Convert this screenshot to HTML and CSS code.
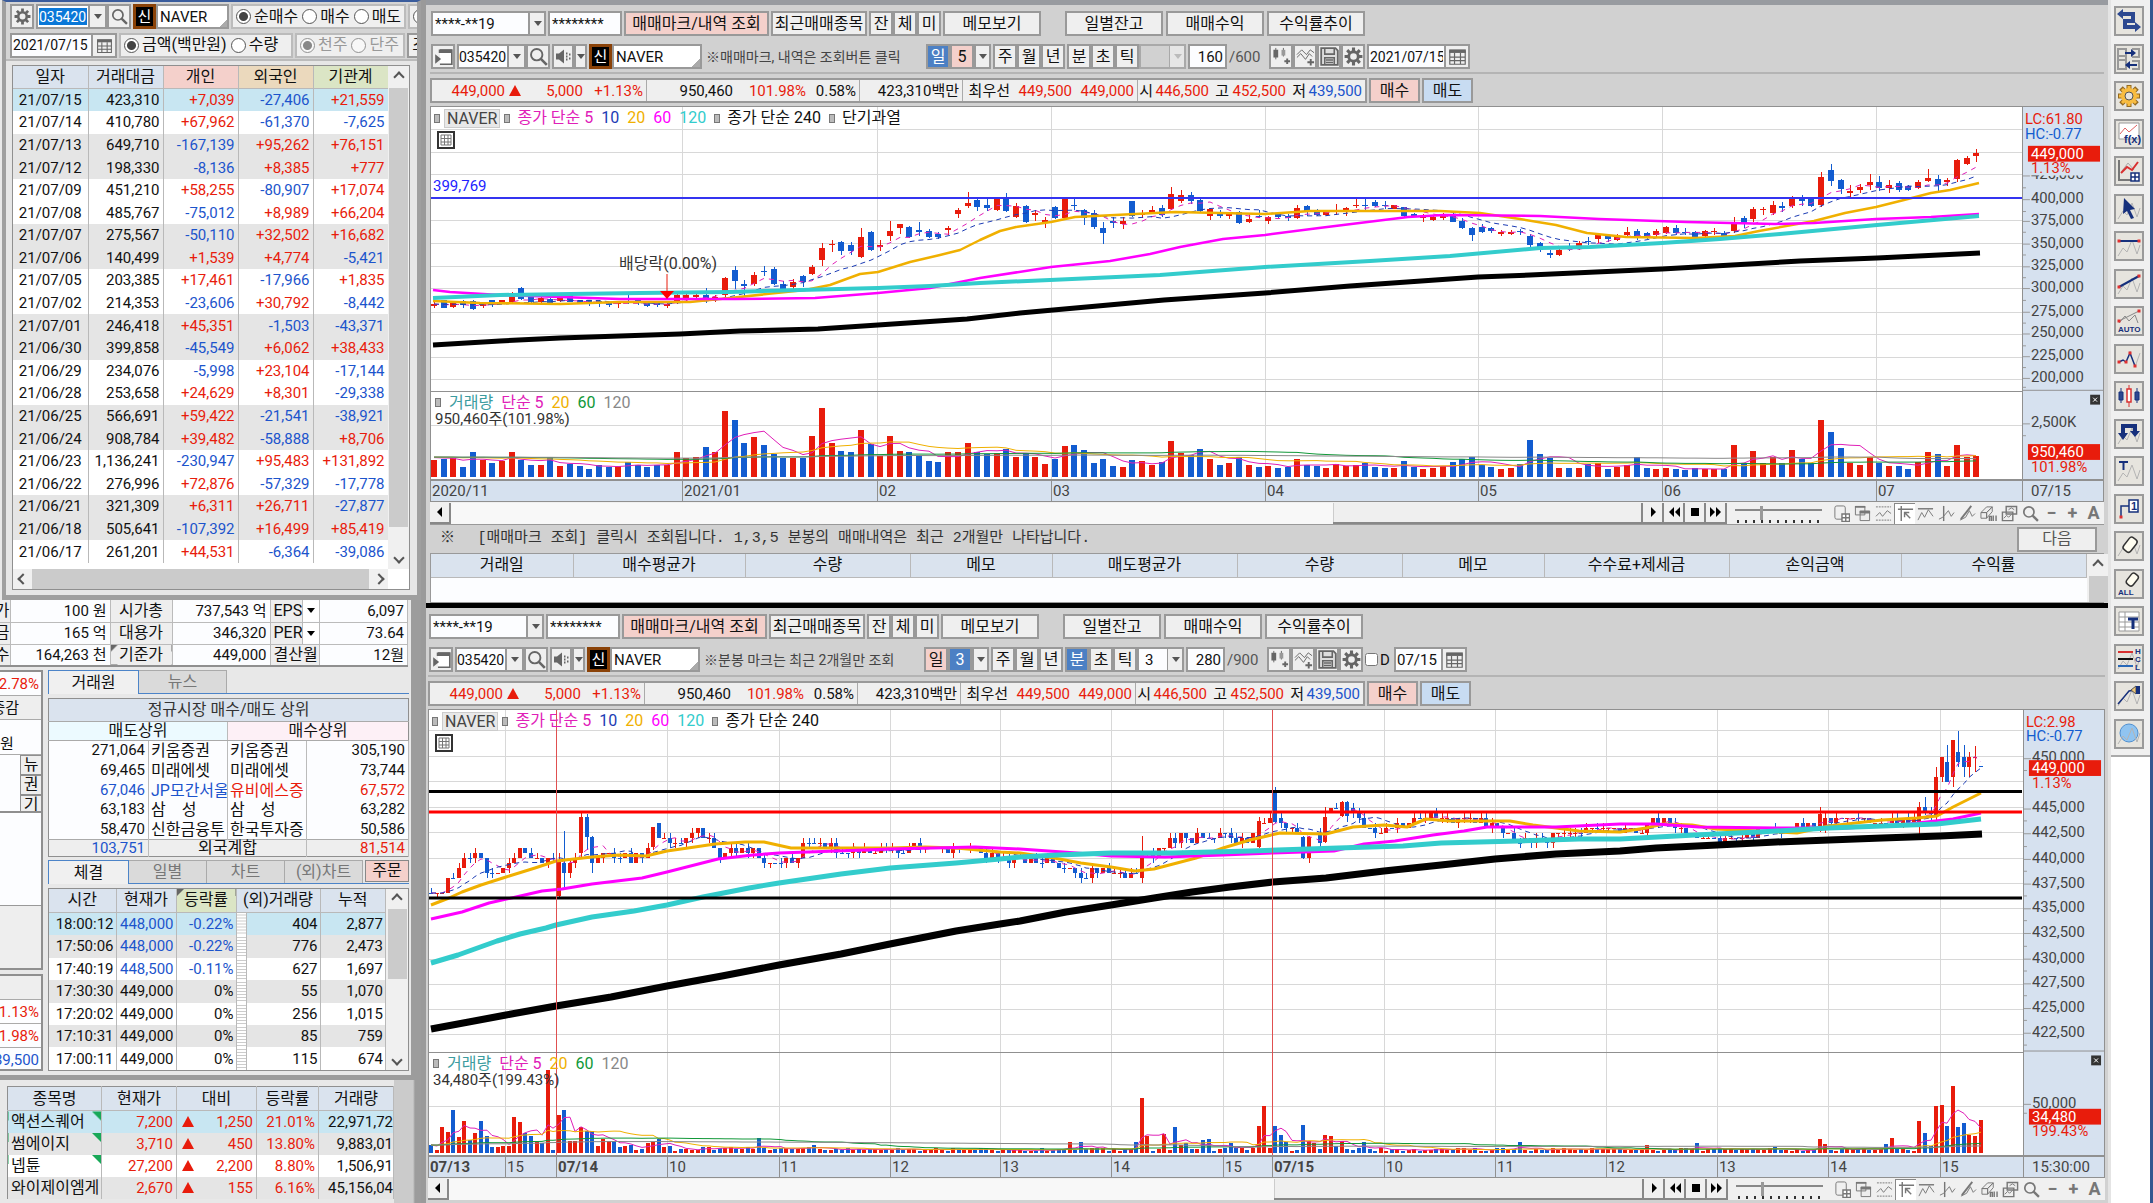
FILE: index.html
```html
<!DOCTYPE html>
<html lang="ko">
<head>
<meta charset="utf-8">
<title>NAVER 종합차트</title>
<link rel="stylesheet" href="styles.css">
</head>
<body>
<svg class="defs" aria-hidden="true">
  <symbol id="gear" viewBox="0 0 16 16"><circle cx="8" cy="8" r="4" fill="none" stroke="currentColor" stroke-width="2.4"/><path d="M8 .5v3M8 12.500v3M.5 8h3M12.500 8h3M2.700 2.700l2 2M11.300 11.300l2 2M2.700 13.300l2-2M11.300 4.700l2-2" stroke="currentColor" stroke-width="2.600"/></symbol>
  <symbol id="mag" viewBox="0 0 16 16"><circle cx="6.500" cy="6.500" r="4.800" fill="none" stroke="currentColor" stroke-width="1.600"/><path d="M10 10l5 5" stroke="currentColor" stroke-width="2.200"/></symbol>
  <symbol id="cal" viewBox="0 0 16 16"><path d="M1 2h14v3H1z" fill="currentColor"/><path d="M1.500 3v11.500h13V3M1 8.500h14M1 11.500h14M5.500 5v9M10.500 5v9" fill="none" stroke="currentColor"/></symbol>
  <symbol id="pane" viewBox="0 0 16 16"><path d="M5 2.500h10v12H5" fill="#fff" stroke="currentColor" stroke-width="1.400"/><path d="M4 2h11v3H4zM1 6l5 4-5 4z" fill="currentColor"/></symbol>
  <symbol id="speaker" viewBox="0 0 16 16"><path d="M1 5h3l5-4v14l-5-4H1zM11 4h1.500v2H11zM11 7h1.500v2H11zM11 10h1.500v2H11zM14 5h1.500v2H14zM14 9h1.500v2H14z" fill="currentColor"/></symbol>
  <symbol id="candplus" viewBox="0 0 20 20"><path d="M4 1v12M12 1v9" stroke="currentColor"/><path d="M1.500 3h5v8h-5zM13 14h6v2h-6zM15 12h2v6h-2z" fill="currentColor"/><path d="M10 3h4v6h-4z" fill="#999"/></symbol>
  <symbol id="lineplus" viewBox="0 0 20 20"><path d="M1 8l5-5 5 5 4-5 4 3M1 11l4-4 5 6 4-6 3 3" fill="none" stroke="currentColor"/><path d="M12 15h7v2h-7zM14.500 12.500h2v7h-2z" fill="currentColor"/></symbol>
  <symbol id="save" viewBox="0 0 16 16"><path d="M1 1h12l2 2v12H1z" fill="#ddd" stroke="currentColor" stroke-width="1.500"/><path d="M4 1v5h8V1M4 15V9h8v6M5 11h6M5 13h6" fill="none" stroke="currentColor" stroke-width="1.300"/></symbol>
  <symbol id="grid" viewBox="0 0 18 18"><path d="M1 1h16v16H1z" fill="#fff" stroke="#333" stroke-width="2"/><path d="M4 4h10v10H4zM4 7.500h10M4 11h10M7.500 4v10M11 4v10" fill="none" stroke="#777"/></symbol>
  <symbol id="t1" viewBox="0 0 18 18"><rect x="2" y="1" width="11" height="14" rx="2" fill="none" stroke="currentColor"/><path d="M9.500 9.500h8v8h-8zM13.500 9.500v8M9.500 13.500h8" fill="#fff" stroke="currentColor" stroke-width="1.500"/></symbol>
  <symbol id="t2" viewBox="0 0 18 18"><path d="M1.500 1.500h10v9h-10zM6.500 6.500h10v10h-10z" fill="#eee" stroke="currentColor"/><path d="M6 6h11v3H6zM1 1h11v2H1z" fill="currentColor"/></symbol>
  <symbol id="t3" viewBox="0 0 18 18"><path d="M1 2h16M1 16h16" stroke="currentColor" stroke-dasharray="2 1"/><path d="M1 12l4-4 3 4 5-6 4 3" fill="none" stroke="currentColor"/></symbol>
  <symbol id="t4" viewBox="0 0 18 18"><path d="M1 4.500h16M4.500 1v16M8 8l6 6M8 13V8h5" fill="none" stroke="currentColor" stroke-width="1.500"/></symbol>
  <symbol id="t5" viewBox="0 0 18 18"><path d="M1 4h16" stroke="currentColor" stroke-width="1.500"/><path d="M1 16l4-8 3 5 4-8 5 7" fill="none" stroke="currentColor"/></symbol>
  <symbol id="t6" viewBox="0 0 18 18"><path d="M6 1v16" stroke="currentColor" stroke-width="1.500"/><path d="M1 15l4-2 6-7 3 6 3-4" fill="none" stroke="currentColor"/></symbol>
  <symbol id="t7" viewBox="0 0 18 18"><path d="M2 15L13 1" stroke="currentColor" stroke-width="2"/><path d="M1 16l6-3 4-7 3 6 3-3" fill="none" stroke="currentColor"/></symbol>
  <symbol id="t8" viewBox="0 0 18 18"><path d="M1 8l6-6h6l-6 6zM1 8h6v6H1zM7 8l6-6v5l-6 7z" fill="#eee" stroke="currentColor"/><path d="M10 17v-5h2v5M14 11v6M17 11v6" fill="none" stroke="currentColor" stroke-width="1.500"/></symbol>
  <symbol id="t9" viewBox="0 0 18 18"><path d="M5.500 1.500h11v8h-11zM1.500 7.500h11v9h-11z" fill="#eee" stroke="currentColor" stroke-width="1.500"/><path d="M3 14l3-3 2 2 3-3M8 5l3-2 3 2" fill="none" stroke="currentColor"/></symbol>
</svg>

<div class="desk">
  <aside class="left">
    <section class="investors" aria-label="투자자별 매매">
      <div class="bar">
        <button class="ico" aria-label="설정"><svg><use href="#gear"/></svg></button>
        <span class="group"><input class="code picked" aria-label="종목코드" value="035420"><button class="arrow" aria-label="목록"></button><button class="ico" aria-label="검색"><svg><use href="#mag"/></svg></button></span>
        <span class="group name"><b class="badge">신</b><input aria-label="종목명" value="NAVER"></span>
        <span class="radios"><label><input type="radio" name="side" checked>순매수</label><label><input type="radio" name="side">매수</label><label><input type="radio" name="side">매도</label></span>
        <span class="radios"><label><input type="radio" name="more">전체</label></span>
      </div>
      <div class="bar">
        <span class="group"><input class="date" aria-label="일자" value="2021/07/15"><button class="ico" aria-label="달력"><svg><use href="#cal"/></svg></button></span>
        <span class="radios wide"><label><input type="radio" name="unit" checked>금액(백만원)</label><label><input type="radio" name="unit">수량</label></span>
        <span class="radios off"><label><input type="radio" name="lot" checked disabled>천주</label><label><input type="radio" name="lot" disabled>단주</label></span>
        <button class="btn cut">조회</button>
      </div>
      <div class="sheet">
        <table class="inv">
          <thead><tr><th>일자</th><th>거래대금</th><th class="pk">개인</th><th class="or">외국인</th><th class="gn">기관계</th></tr></thead>
          <tbody id="inv"></tbody>
        </table>
        <div class="vscroll"><i class="up"></i><b></b><i class="down"></i></div>
        <div class="hscroll"><i class="lt"></i><b></b><i class="rt"></i></div>
      </div>
    </section>

    <section class="quote" aria-label="현재가">
      <table class="facts">
        <tr><th>가</th><td>100 원</td><th>시가총</th><td>737,543 억</td><th class="l">EPS</th><td class="dd"><button class="arrow" aria-label="EPS 선택"></button></td><td>6,097</td></tr>
        <tr><th>금</th><td>165 억</td><th>대용가</th><td>346,320</td><th class="l">PER</th><td class="dd"><button class="arrow" aria-label="PER 선택"></button></td><td>73.64</td></tr>
        <tr><th>수</th><td>164,263 천</td><th class="mark">기준가</th><td>449,000</td><th class="l" colspan="2">결산월</th><td>12월</td></tr>
      </table>
      <div class="split">
        <div class="edge">
          <div class="edge-top"><p class="r">42.78%</p><p class="g">증감</p><p class="tall">원</p><div class="vt"><button>뉴</button><button>권</button><button>기</button></div></div>
          <div class="edge-mid"></div>
          <div class="edge-low"><p class="g"></p><p class="r">1.13%</p><p class="r">101.98%</p><p class="b">439,500</p></div>
        </div>
        <div class="detail">
          <div class="tabs"><button class="on w91">거래원</button><button class="w88">뉴스</button></div>
          <table class="brokers">
            <colgroup><col class="w100"><col class="w79"><col class="w79"><col></colgroup>
            <thead><tr><th colspan="4">정규시장 매수/매도 상위</th></tr><tr class="sub"><th colspan="2">매도상위</th><th colspan="2">매수상위</th></tr></thead>
            <tbody>
              <tr><td>271,064</td><td>키움증권</td><td>키움증권</td><td>305,190</td></tr>
              <tr><td>69,465</td><td>미래에셋</td><td>미래에셋</td><td>73,744</td></tr>
              <tr><td class="b">67,046</td><td class="b">JP모간서울</td><td class="r">유비에스증</td><td class="r">67,572</td></tr>
              <tr><td>63,183</td><td>삼　성</td><td>삼　성</td><td>63,282</td></tr>
              <tr><td>58,470</td><td>신한금융투</td><td>한국투자증</td><td>50,586</td></tr>
            </tbody>
            <tfoot><tr><td class="b">103,751</td><td colspan="2">외국계합</td><td class="r">81,514</td></tr></tfoot>
          </table>
          <div class="tabs second"><button class="on w81">체결</button><button class="w77">일별</button><button class="w77">차트</button><button class="w77">(외)차트</button><span></span><button class="order">주문</button></div>
          <div class="ticks">
            <table>
              <colgroup><col class="w67"><col class="w60"><col class="w60"><col class="w10"><col class="w74"><col></colgroup>
              <thead><tr><th>시간</th><th>현재가</th><th class="gn mark">등락률</th><th colspan="2">(외)거래량</th><th>누적</th></tr></thead>
              <tbody id="ticks"></tbody>
            </table>
            <div class="vscroll"><i class="up"></i><b></b><i class="down"></i></div>
          </div>
        </div>
      </div>
    </section>

    <section class="watch" aria-label="관심종목">
      <table>
        <colgroup><col class="w94"><col class="w75"><col class="w20"><col class="w60"><col class="w62"><col></colgroup>
        <thead><tr><th>종목명</th><th>현재가</th><th colspan="2">대비</th><th>등락률</th><th>거래량</th></tr></thead>
        <tbody>
          <tr><td class="new">액션스퀘어</td><td>7,200</td><td><i class="tri"></i></td><td>1,250</td><td>21.01%</td><td>22,971,72</td></tr>
          <tr><td class="new">썸에이지</td><td>3,710</td><td><i class="tri"></i></td><td>450</td><td>13.80%</td><td>9,883,01</td></tr>
          <tr><td class="new">넵튠</td><td>27,200</td><td><i class="tri"></i></td><td>2,200</td><td>8.80%</td><td>1,506,91</td></tr>
          <tr><td>와이제이엠게</td><td>2,670</td><td><i class="tri"></i></td><td>155</td><td>6.16%</td><td>45,156,04</td></tr>
        </tbody>
      </table>
    </section>
  </aside>

  <main>
    <section class="win" aria-label="일봉 차트">
      <div class="bar">
        <span class="group sel"><select class="acct" aria-label="계좌"><option>****-**19</option></select></span>
        <input class="pw" aria-label="비밀번호" value="********">
        <button class="btn pink b144">매매마크/내역 조회</button><button class="btn b96">최근매매종목</button>
        <span class="group"><button class="sq">잔</button><button class="sq">체</button><button class="sq">미</button></span>
        <button class="btn b99 far">메모보기</button><button class="btn b99">일별잔고</button><button class="btn b99">매매수익</button><button class="btn b99">수익률추이</button>
      </div>
      <div class="bar under">
        <button class="ico" aria-label="패널"><svg><use href="#pane"/></svg></button>
        <span class="group"><input class="code" aria-label="종목코드" value="035420"><button class="arrow" aria-label="목록"></button><button class="ico" aria-label="검색"><svg><use href="#mag"/></svg></button></span>
        <span class="group"><button class="ico voice" aria-label="음성"><svg><use href="#speaker"/></svg></button><button class="arrow thin" aria-label="음성 목록"></button></span>
        <span class="group name"><b class="badge">신</b><input aria-label="종목명" value="NAVER"></span>
        <span class="hint">※매매마크, 내역은 조회버튼 클릭</span>
        <span class="group"><button class="sq blue">일</button><button class="sq rose">5</button><button class="arrow" aria-label="일 목록"></button></span>
        <span class="group"><button class="sq">주</button><button class="sq">월</button><button class="sq">년</button></span>
        <span class="group"><button class="sq">분</button><button class="sq">초</button><button class="sq">틱</button><span class="sel none"><select aria-label="주기" disabled><option></option></select></span></span>
        <input class="num" aria-label="표시 봉수" value="160"><span class="total">/600</span>
        <span class="group"><button class="ico" aria-label="봉 추가"><svg><use href="#candplus"/></svg></button><button class="ico" aria-label="지표 추가"><svg><use href="#lineplus"/></svg></button><button class="ico" aria-label="저장"><svg><use href="#save"/></svg></button><button class="ico" aria-label="설정"><svg><use href="#gear"/></svg></button></span>
        <span class="group"><input class="date" aria-label="일자" value="2021/07/15"><button class="ico" aria-label="달력"><svg><use href="#cal"/></svg></button></span>
      </div>
      <div class="prices"></div>
      <div class="chart">
        <div class="plot">
          <svg id="plotDay" preserveAspectRatio="none" viewBox="431 107 1591 372"></svg>
          <p class="legend"><i></i><em>NAVER</em><i></i><span class="c5">종가 단순 5</span><span class="c10">10</span><span class="c20">20</span><span class="c60">60</span><span class="c120">120</span><i></i><span>종가 단순 240</span><i></i><span>단기과열</span></p>
          <svg class="gridbtn"><use href="#grid"/></svg>
          <span class="level">399,769</span>
          <span class="note">배당락(0.00%)</span>
          <div class="volume day"><p><i></i><span class="cv">거래량</span><span class="c5">단순 5</span><span class="c20">20</span><span class="cg">60</span><span class="cx">120</span></p><p>950,460주(101.98%)</p></div>
        </div>
        <svg class="axis" id="axisDay" viewBox="2022 107 81 372"></svg>
        <div class="times" id="timeDay"></div>
        <div class="times last">07/15</div>
      </div>
      <div class="player"></div>
      <div class="guide"><p>※&emsp;&ensp;[매매마크 조회] 클릭시 조회됩니다. 1,3,5 분봉의 매매내역은 최근 2개월만 나타납니다.</p><button class="btn">다음</button></div>
      <div class="trades">
        <table>
          <colgroup><col class="w141"><col class="w171"><col class="w166"><col class="w141"><col class="w186"><col class="w166"><col class="w141"><col class="w186"><col class="w171"><col class="w186"></colgroup>
          <thead><tr><th>거래일</th><th>매수평균가</th><th>수량</th><th>메모</th><th>매도평균가</th><th>수량</th><th>메모</th><th>수수료+제세금</th><th>손익금액</th><th>수익률</th></tr></thead><tbody><tr><td colspan="10"></td></tr></tbody></table>
        <div class="vscroll"><i class="up"></i><b></b></div>
      </div>
    </section>

    <section class="win second" aria-label="분봉 차트">
      <div class="bar">
        <span class="group sel"><select class="acct" aria-label="계좌"><option>****-**19</option></select></span>
        <input class="pw" aria-label="비밀번호" value="********">
        <button class="btn pink b144">매매마크/내역 조회</button><button class="btn b96">최근매매종목</button>
        <span class="group"><button class="sq">잔</button><button class="sq">체</button><button class="sq">미</button></span>
        <button class="btn b99 far">메모보기</button><button class="btn b99">일별잔고</button><button class="btn b99">매매수익</button><button class="btn b99">수익률추이</button>
      </div>
      <div class="bar under">
        <button class="ico" aria-label="패널"><svg><use href="#pane"/></svg></button>
        <span class="group"><input class="code" aria-label="종목코드" value="035420"><button class="arrow" aria-label="목록"></button><button class="ico" aria-label="검색"><svg><use href="#mag"/></svg></button></span>
        <span class="group"><button class="ico voice" aria-label="음성"><svg><use href="#speaker"/></svg></button><button class="arrow thin" aria-label="음성 목록"></button></span>
        <span class="group name"><b class="badge">신</b><input aria-label="종목명" value="NAVER"></span>
        <span class="hint">※분봉 마크는 최근 2개월만 조회</span>
        <span class="group"><button class="sq rose">일</button><button class="sq blue">3</button><button class="arrow" aria-label="일 목록"></button></span>
        <span class="group"><button class="sq">주</button><button class="sq">월</button><button class="sq">년</button></span>
        <span class="group"><button class="sq blue">분</button><button class="sq">초</button><button class="sq">틱</button><span class="sel"><select class="step" aria-label="주기"><option>3</option></select></span></span>
        <input class="num" aria-label="표시 봉수" value="280"><span class="total">/900</span>
        <span class="group"><button class="ico" aria-label="봉 추가"><svg><use href="#candplus"/></svg></button><button class="ico" aria-label="지표 추가"><svg><use href="#lineplus"/></svg></button><button class="ico" aria-label="저장"><svg><use href="#save"/></svg></button><button class="ico" aria-label="설정"><svg><use href="#gear"/></svg></button></span>
        <label class="dcheck"><input type="checkbox">D</label>
        <span class="group"><input class="md" aria-label="일자" value="07/15"><button class="ico" aria-label="달력"><svg><use href="#cal"/></svg></button></span>
      </div>
      <div class="prices"></div>
      <div class="chart minute">
        <div class="plot">
          <svg id="plotMin" preserveAspectRatio="none" viewBox="429 710 1594 445"></svg>
          <p class="legend"><i></i><em>NAVER</em><i></i><span class="c5">종가 단순 5</span><span class="c10">10</span><span class="c20">20</span><span class="c60">60</span><span class="c120">120</span><i></i><span>종가 단순 240</span></p>
          <svg class="gridbtn"><use href="#grid"/></svg>
          <div class="volume min"><p><i></i><span class="cv">거래량</span><span class="c5">단순 5</span><span class="c20">20</span><span class="cg">60</span><span class="cx">120</span></p><p>34,480주(199.43%)</p></div>
        </div>
        <svg class="axis" id="axisMin" viewBox="2023 710 81 445"></svg>
        <div class="times" id="timeMin"></div>
        <div class="times last">15:30:00</div>
      </div>
      <div class="player late"></div>
    </section>
  </main>

  <nav class="tools" aria-label="차트 도구"><div id="tools"></div></nav>
</div>
<script src="app.js"></script>
</body>
</html>
```
FILE: styles.css
```css
:root {
  --red: #e81c0c;
  --blue: #1c54cc;
  --line: #8f8f8f;
  --head: #dae3ee;
  --face: #efefef;
}
* { box-sizing: border-box; }
body {
  margin: 0;
  overflow: hidden;
  background: #f0f0f0;
  color: #111;
  font: 15px/20px Roboto, "Noto Sans CJK KR", sans-serif;
}
p { margin: 0; }
button, input, select { margin: 0; padding: 0; font: inherit; color: inherit; border-radius: 0; white-space: nowrap; }
table { border-collapse: collapse; table-layout: fixed; }
th { font-weight: normal; padding: 0; white-space: nowrap; font-size: 16px; }
td { padding: 0 3px; white-space: nowrap; text-align: right; }
.defs { position: absolute; width: 0; height: 0; }
.r { color: var(--red); }
.b { color: var(--blue); }
.desk { display: flex; align-items: stretch; min-height: 1203px; }
.w10 { width: 10px; } .w20 { width: 20px; } .w60 { width: 60px; } .w62 { width: 62px; } .w67 { width: 67px; } .w74 { width: 74px; }
.w75 { width: 75px; } .w77 { width: 78px; } .w79 { width: 79px; } .w81 { width: 81px; } .w88 { width: 88px; } .w91 { width: 91px; } .w94 { width: 94px; } .w100 { width: 100px; }
.w141 { width: 142px; } .w166 { width: 165px; } .w171 { width: 172px; } .w186 { width: 185px; }

/* controls */
.bar { display: flex; align-items: center; gap: 2px; height: 25px; white-space: nowrap; }
.bar > * { flex: none; }
.bar input, .bar select, .pw { height: 25px; background: #fcfdff; border: 2px solid #999; padding: 0 2px; }
.group { display: flex; }
.group > * + *, .group input + button { border-left: 0; }
.ico, .arrow, .sq, .btn { height: 25px; background: var(--face); border: 2px solid #999; font-size: 16px; line-height: 20px; display: flex; align-items: center; justify-content: center; }
.ico { width: 24px; color: #666; }
.ico svg { width: 17px; height: 17px; flex: none; }
.arrow { width: 17px; }
.arrow::after, .sel::after { content: ""; border: 4px solid transparent; border-top: 5px solid #555; border-bottom: 0; }
.sel { position: relative; }
.sel::after { position: absolute; right: 4px; top: 10px; pointer-events: none; }
.sel select { appearance: none; width: 47px; background: linear-gradient(90deg, transparent 28px, #999 28px, #999 29px, #efefef 29px); }
.bar .sel .step { padding-left: 6px; background: linear-gradient(90deg, #fcfdff 28px, #999 28px, #999 29px, #efefef 29px); }
.sel.none::after { border-top-color: #bbb; }
.sel .acct { width: 115px; background: linear-gradient(90deg, #fcfdff 95px, #999 95px, #999 97px, #efefef 97px); }
.sq { width: 24px; }
.rose, .pink { background: #f4d0cb; }
.blue { background: #4c80c4; color: #fff; }
.bar .code { width: 54px; padding: 0 1px; font-size: 14px; }
.win .bar .code { width: 52px; padding: 0; }
.bar .date { font-size: 14px; padding: 0 1px; }
.picked { color: #fff; background: #fff linear-gradient(#0a78d8, #0a78d8) center / 48px 17px no-repeat !important; }
.badge { width: 23px; height: 25px; background: #000; color: #fff; border: 3px solid #8a4208; font: 15px/18px "Noto Sans CJK KR", sans-serif; text-align: center; }
.name input { width: 73px; background: linear-gradient(135deg, #fff 92%, #aaa 92%); }
.win .name input { width: 90px; }
.radios { display: flex; align-items: center; gap: 4px; height: 25px; padding: 0 3px; background: var(--face); border: 2px solid #bbb; font-size: 16px; }
.radios label { display: flex; align-items: center; gap: 3px; }
.radios input, .bar input[type=radio] { width: 15px; height: 15px; border: 1px solid #555; border-radius: 50%; appearance: none; padding: 0; background: #fff; }
.bar input[type=radio]:checked { background: radial-gradient(#444 0 4px, #fff 5px); }
.radios.off { color: #999; }
.radios.off input { opacity: .6; }

/* scroll bars */
.vscroll { display: flex; flex-direction: column; background: #f0f0f0; align-items: center; }
.vscroll b { width: 19px; background: #cbcbcb; }
.vscroll i, .hscroll i { width: 19px; height: 22px; display: grid; place-items: center; flex: none; }
.vscroll i::after, .hscroll i::after { content: ""; width: 6px; height: 6px; border: solid #555; border-width: 2px 0 0 2px; transform: rotate(45deg); }
.vscroll .down::after { transform: rotate(225deg); }
.hscroll .lt::after { transform: rotate(-45deg); }
.hscroll .rt::after { transform: rotate(135deg); }
.hscroll { display: flex; align-items: center; background: #f0f0f0; height: 20px; }
.hscroll b { flex: 1; height: 20px; background: #cbcbcb; }
.hscroll i { height: 20px; }

/* left column */
.left { width: 421px; flex: none; background: #e8e8e8; overflow: hidden; }
.investors { height: 600px; margin-left: 2px; border: solid #9f9f9f; border-width: 0 4px 5px; background: #e6e6e6; border-top: 2px solid #3a5c9c; overflow: hidden; }
.investors .bar { padding: 2px 3px 2px 4px; height: 29px; background: #d4d4d4; }
.investors .bar + .bar { border-bottom: 2px solid #bbb; height: 30px; }
.investors .date { width: 83px; }
.investors .radios { min-width: 174px; }
.investors .radios.off { min-width: 110px; }
.cut { width: 40px; }
.sheet { margin: 4px 7px 0 6px; border: 1px solid var(--line); display: grid; grid-template-columns: 375px 1fr; grid-template-rows: 503px 20px; background: #fff; }
.inv { width: 375px; height: 497px; }
.inv th { width: 75px; height: 22px; background: var(--head); border: 1px solid #b9b9b9; border-width: 0 1px 1px 0; }
.inv th.pk { background: #f4d0cb; } .inv th.or { background: #ebd9bd; } .inv th.gn, .ticks th.gn { background: #dbe5c5; }
.inv td { border-right: 1px solid #b9b9b9; }
.inv td:first-child { text-align: center; }
.inv tr:nth-child(4n+3), .inv tbody tr:nth-child(4n+4) { background: #e5e5e5; }
tbody tr.now, .watch tbody tr:first-child { background: #c8e6f2; }
.inv + .vscroll b { flex: 1; margin-bottom: 20px; }
.hscroll { grid-column: 1; }

.quote { border-right: 10px solid #9c9c9c; border-bottom: 5px solid #9c9c9c; height: 480px; overflow: hidden; }
.facts { width: 408px; background: #fcfdff; border-bottom: 2px solid var(--line); border-right: 1px solid var(--line); }
.facts tr { height: 22px; }
.facts td, .facts th { border: 1px solid #bbb; border-width: 0 1px 1px 0; height: 22px; }
.facts th { background: #eee; overflow: hidden; }
.facts tr > :nth-child(1) { width: 10px; direction: rtl; } .facts tr > :nth-child(2) { width: 100px; } .facts tr > :nth-child(3) { width: 62px; }
.facts tr > :nth-child(4) { width: 98px; } .facts tr:not(:last-child) > :nth-child(5) { width: 32px; } .facts .dd { width: 17px; padding: 0; }
.facts .arrow { width: 16px; height: 20px; border: 0; background: #fff; }
.facts .arrow::after { border-top-color: #000; }
.facts th.l { text-align: left; padding-left: 3px; }
.mark { background-image: linear-gradient(135deg, #666 5px, transparent 5px) !important; }
.split { display: flex; gap: 5px; padding-top: 3px; }
.edge { width: 43px; flex: none; display: flex; flex-direction: column; }
.edge > div { border: 2px solid var(--line); border-left: 0; overflow: hidden; background: #fcfdff; }
.edge p { height: 24px; border-bottom: 1px solid #aaa; display: flex; justify-content: flex-end; align-items: center; padding-right: 2px; white-space: nowrap; }
.edge .g { background: #eee; padding-right: 22px; }
.edge-top { height: 143px; }
.edge .tall { height: 35px; align-items: end; justify-content: flex-start; }
.vt { margin-left: 20px; }
.vt button { display: block; width: 22px; height: 20px; border: 1px solid var(--line); background: #eee; font-size: 16px; line-height: 16px; }
.edge-mid { height: 157px; border-top: 0 !important; background: linear-gradient(#fcfdff 92px, #999 92px, #999 93px, #eee 93px) !important; }
.edge-low { margin-top: 4px; height: 97px; }
.detail { width: 361px; }
.tabs { display: flex; height: 24px; border-bottom: 1px solid #4c84c8; }
.tabs button { height: 23px; border: 1px solid #aaa; border-left: 0; border-bottom: 0; background: #dadada; color: #777; font-size: 16px; line-height: 20px; }
.tabs .on { background: #f0f0f0; color: #111; border: 1px solid #4c84c8; border-bottom: 0; height: 24px; }
.tabs span { flex: 1; }
.tabs .order { width: 44px; background: #f4d0cb; color: #111; border: 1px solid #888; height: 22px; }
.brokers { width: 361px; height: 159px; margin: 4px 0 3px; background: #fcfdff; border: 1px solid var(--line); }
.brokers th { height: 23px; background: var(--head); border-bottom: 1px solid #aaa; color: #333; }
.brokers .sub th { height: 19px; line-height: 18px; background: #ecfaff; color: #111; }
.brokers .sub th + th { background: #fdf0f6; border-left: 1px solid #bbb; }
.brokers td { line-height: 19px; border-right: 1px solid #bbb; }
.brokers tbody td:nth-child(2), .brokers tbody td:nth-child(3) { text-align: left; font-size: 16px; overflow: hidden; padding: 0 0 0 2px; }
.brokers tfoot td { background: #eee; border-top: 1px solid #aaa; line-height: 16px; }
.brokers tfoot td:nth-child(2) { text-align: center; font-size: 16px; }
.ticks { display: grid; grid-template-columns: 337px 1fr; margin-top: 4px; border: 1px solid var(--line); background: #fff; }
.ticks th { height: 23px; background: var(--head); border: 1px solid #b9b9b9; border-width: 0 1px 1px 0; }
.ticks table { width: 337px; height: 181px; }
.ticks td { border-right: 1px solid #b9b9b9; padding: 0 2px; }
.ticks td:nth-child(4) { background: repeating-linear-gradient(#fff 0 2px, #ccc 2px 3px); }
.ticks tbody tr:nth-child(even) { background: #e5e5e5; }
.ticks .vscroll b { height: 70px; margin-bottom: auto; }
.ticks .vscroll i { height: 20px; }

.watch { padding: 6px 0 0 7px; height: 123px; background: linear-gradient(90deg, transparent 394px, #cbcbcb 394px, #cbcbcb 413px, #9c9c9c 415px); }
.watch table { width: 387px; border-left: 1px solid var(--line); border-top: 1px solid var(--line); background: #fff; }
.watch th { height: 24px; background: var(--head); border: 1px solid #b9b9b9; border-width: 0 1px 1px 0; }
.watch td { height: 22px; border-right: 1px solid #b9b9b9; color: var(--red); line-height: 22px; }
.watch td:first-child { text-align: left; color: #111; font-size: 16px; padding-right: 0; }
.watch td:nth-child(3) { border: 0; }
.watch td:last-child { color: #111; padding-right: 0; }
.watch .new { background: linear-gradient(225deg, #18a858 7px, transparent 7px); }
.watch tbody tr:nth-child(even) { background: #e5e5e5; }
.tri { display: inline-block; justify-self: center; width: 0; border: 6px solid transparent; border-bottom: 11px solid var(--red); border-top: 0; }

/* chart windows */
main { flex: 1; min-width: 0; background: #d1d1d1; border-left: 5px solid #9a9a9a; }
.win { padding: 6px 4px 0 4px; border-top: 5px solid #989ba0; }
.win > .bar { padding-left: 1px; }
.win .bar.under { margin-top: 8px; }
.win.second { padding: 6px 3px 0 2px; border-top: 5px solid #000; }
.pw { width: 74px; }
.b144 { width: 145px; } .b96 { width: 96px; } .b99 { width: 98px; margin-right: 1px; }
.btn.far { margin-right: 22px; }
.win .under .ico svg { width: 19px; height: 19px; }
.win .under .voice { width: 22px; }
.win .under .voice svg { width: 16px; }
.thin { width: 13px; }
.hint { width: 220px; padding-left: 2px; color: #444; font-size: 14px; overflow: hidden; }
.num { width: 39px; text-align: right; }
.total { width: 38px; color: #555; }
.win .date { width: 79px; }
.dcheck { display: flex; align-items: center; gap: 2px; width: 27px; }
.bar .dcheck input { width: 13px; height: 15px; margin: 0; }
.win .bar .md { width: 49px; padding: 0 1px; }
.prices { display: flex; gap: 2px; height: 34px; margin-top: 3px; padding-top: 4px; border-top: 2px solid #b4b4b4; }
.quotes { display: flex; height: 25px; border: 2px solid #999; background: var(--face); }
.quotes > div { display: grid; align-items: center; text-align: right; border-right: 1px solid #aaa; padding-right: 3px; white-space: nowrap; }
.quotes > div:last-child { border: 0; }
.quotes .q1 { grid-template-columns: 73px 20px 58px 60px; }
.quotes .q2 { grid-template-columns: 86px 73px 50px; }
.quotes .q3 { grid-template-columns: 99px; }
.quotes .q4 { grid-template-columns: 47px 62px 62px; }
.quotes .q5 { grid-template-columns: 15px 56px 20px 57px 20px 56px; }
.prices .btn { width: 51px; }
.sell { background: #c8dcf2; }
.chart { display: grid; grid-template-columns: 1fr 81px; border: 1px solid #909090; background: #fff; }
.plot { position: relative; height: 372px; }
.minute .plot { height: 445px; }
.plot > svg:first-child { display: block; width: 100%; height: 100%; }
.axis { display: block; width: 81px; height: 372px; background: #d6e1ef; border-left: 1px solid #909090; font-size: 15px; }
.minute .axis { height: 445px; }
.times { position: relative; height: 22px; background: #d6e1ef; border-top: 2px solid #909090; color: #444; overflow: hidden; }
.times.last { border-left: 1px solid #909090; padding-left: 8px; }
.times span { position: absolute; top: 0; height: 20px; padding-left: 1px; border-left: 1px solid #909090; }
.times span:first-child { border: 0; }
.legend { position: absolute; left: 3px; top: 1px; display: flex; align-items: center; gap: 8px; font-size: 16px; }
.legend em { font-style: normal; background: #e8e8e8; border: 1px solid #ccc; padding: 0 2px; line-height: 17px; color: #444; margin: 0 -4px; }
.legend i, .volume i { width: 6px; height: 9px; background: #bbb; border: 1px solid #777; }
.legend i + span { margin-left: -1px; }
.c5 { color: #e020b8; } .c10 { color: #1c3cb4; } .c20 { color: #f0b000; } .c60 { color: #f0f; } .c120 { color: #33cccc; } .cg { color: #109838; } .cx { color: #888; } .cv { color: #3c9ca0; }
.gridbtn { position: absolute; left: 6px; top: 24px; width: 18px; height: 18px; }
.level { position: absolute; left: 2px; top: 69px; color: #22f; }
.note { position: absolute; left: 188px; top: 147px; color: #333; font-size: 16px; }
.volume { position: absolute; left: 4px; color: #333; font-size: 16px; line-height: 17px; }
.volume.day { top: 287px; }
.volume.min { top: 345px; }
.volume p { display: flex; align-items: center; gap: 8px; }
.volume p + p { font-size: 15px; }
.player { display: flex; align-items: center; height: 22px; background: #f0f0f0; }
.player .track { flex: 1; display: flex; height: 21px; background: #f8f8f8; }
.player .thumb { margin-left: auto; width: 26%; background: #efefef; border: solid #888; border-width: 0 2px 2px 0; box-shadow: inset 1px 0 #ccc; }
.late .thumb { width: 31%; }
.player .key { width: 21px; height: 21px; background: #f0f0f0; border: solid #888; border-width: 0 2px 2px 0; display: grid; place-items: center; }
.player .key svg { width: 12px; height: 12px; }
.player input { width: 87px; height: 21px; margin: 0 9px 0 8px; appearance: none; background: linear-gradient(#888, #888) 0 6px / 100% 2px no-repeat, repeating-linear-gradient(90deg, #333 0 2px, transparent 2px 8px) 2px 17px / 100% 3px no-repeat; }
.player input::-webkit-slider-thumb { appearance: none; width: 3px; height: 14px; background: #999; }
.player .tool { width: 21px; height: 21px; border: 0; background: none; color: #777; display: grid; place-items: center; font: bold 18px/20px Roboto, sans-serif; }
.player .tool svg { width: 17px; height: 17px; }
.player .pressed { background: #fff; border: solid #888; border-width: 1px 0 0 1px; }
.guide { display: flex; align-items: center; justify-content: space-between; height: 29px; padding: 0 7px 0 10px; color: #333; border-top: 1px solid #999; }
.guide p { font: 15px/20px "Liberation Mono", "Noto Sans CJK KR", monospace; }
.guide .btn { width: 80px; color: #555; }
.trades { display: grid; grid-template-columns: 1fr 23px; height: 50px; background: #fcfdff; border: 1px solid #999; }
.trades table { width: 100%; height: 48px; }
.trades th { height: 23px; background: var(--head); border: 1px solid #b9b9b9; border-width: 0 1px 1px 0; }
.trades .vscroll b { flex: 1; }

/* drawing tools */
.tools { width: 45px; flex: none; background: #fff; border-left: 3px solid #e4e4e4; border-right: 3px solid #34568f; }
.tools > div { height: 757px; padding: 6px 6px 6px 3px; display: flex; flex-direction: column; justify-content: space-between; background: #f0f0f0; border-bottom: 2px solid #aaa; }
.tools button { width: 30px; height: 30px; padding: 1px; background: #e6e4de; border: 2px solid #9a9a9a; overflow: hidden; }
.tools svg { display: block; width: 24px; height: 24px; fill: none; }
.tools text { fill: #16307c; font: bold 8px "Liberation Sans", sans-serif; stroke: none; }
.tools .big { font-size: 11px; }
```
FILE: app.js
```js
const $ = id => document.getElementById(id);
const RED = '#e81c0c', BLUE = '#125cd0';

/* tables */
const inv = `21/07/15 423,310 +7,039 -27,406 +21,559
21/07/14 410,780 +67,962 -61,370 -7,625
21/07/13 649,710 -167,139 +95,262 +76,151
21/07/12 198,330 -8,136 +8,385 +777
21/07/09 451,210 +58,255 -80,907 +17,074
21/07/08 485,767 -75,012 +8,989 +66,204
21/07/07 275,567 -50,110 +32,502 +16,682
21/07/06 140,499 +1,539 +4,774 -5,421
21/07/05 203,385 +17,461 -17,966 +1,835
21/07/02 214,353 -23,606 +30,792 -8,442
21/07/01 246,418 +45,351 -1,503 -43,371
21/06/30 399,858 -45,549 +6,062 +38,433
21/06/29 234,076 -5,998 +23,104 -17,144
21/06/28 253,658 +24,629 +8,301 -29,338
21/06/25 566,691 +59,422 -21,541 -38,921
21/06/24 908,784 +39,482 -58,888 +8,706
21/06/23 1,136,241 -230,947 +95,483 +131,892
21/06/22 276,996 +72,876 -57,329 -17,778
21/06/21 321,309 +6,311 +26,711 -27,877
21/06/18 505,641 -107,392 +16,499 +85,419
21/06/17 261,201 +44,531 -6,364 -39,086`;
const tone = v => v[0] === '+' ? ' class="r"' : v[0] === '-' ? ' class="b"' : '';
$('inv').innerHTML = inv.split('\n').map((row, i) =>
  `<tr${i ? '' : ' class="now"'}>${row.split(' ').map(v => `<td${tone(v)}>${v}</td>`).join('')}</tr>`).join('');

const ticks = `18:00:12 448,000 -0.22% 404 2,877
17:50:06 448,000 -0.22% 776 2,473
17:40:19 448,500 -0.11% 627 1,697
17:30:30 449,000 0% 55 1,070
17:20:02 449,000 0% 256 1,015
17:10:31 449,000 0% 85 759
17:00:11 449,000 0% 115 674`;
$('ticks').innerHTML = ticks.split('\n').map((row, i) => {
  const [t, p, d, v, s] = row.split(' '), c = tone(d);
  return `<tr${i ? '' : ' class="now"'}><td>${t}</td><td${c}>${p}</td><td${c}>${d}</td><td></td><td>${v}</td><td>${s}</td></tr>`;
}).join('');

/* price strip and player, shared by both chart windows */
document.querySelectorAll('.prices').forEach(el => {
  el.innerHTML = `<div class="quotes">
    <div class="q1"><span class="r">449,000</span><i class="tri"></i><span class="r">5,000</span><span class="r">+1.13%</span></div>
    <div class="q2"><span>950,460</span><span class="r">101.98%</span><span>0.58%</span></div>
    <div class="q3"><span>423,310백만</span></div>
    <div class="q4"><span>최우선</span><span class="r">449,500</span><span class="r">449,000</span></div>
    <div class="q5"><span>시</span><span class="r">446,500</span><span>고</span><span class="r">452,500</span><span>저</span><span class="b">439,500</span></div>
  </div><button class="btn pink">매수</button><button class="btn sell">매도</button>`;
});
const key = (name, d) => `<button class="key" aria-label="${name}"><svg viewBox="0 0 12 12"><path d="${d}"/></svg></button>`;
document.querySelectorAll('.player').forEach(el => {
  el.innerHTML = key('이전', 'M8 1v10L3 6z') + '<div class="track"><div class="thumb"></div></div>' +
    key('재생', 'M4 1v10l5-5z') + key('뒤로', 'M6 1v10L1 6zM12 1v10L7 6z') + key('정지', 'M2 2h8v8H2z') + key('앞으로', 'M0 1v10l5-5zM6 1v10l5-5z') +
    '<input type="range" aria-label="속도" value="30">' +
    [1, 2, 3, 4, 5, 6, 7, 8, 9].map(n => `<button class="tool${n === 4 ? ' pressed' : ''}" aria-label="도구 ${n}"><svg><use href="#t${n}"/></svg></button>`).join('') +
    '<button class="tool" aria-label="확대경"><svg><use href="#mag"/></svg></button><button class="tool">−</button><button class="tool">+</button><button class="tool">A</button>';
});

/* chart drawing */
const line = (pts, color, w, extra = '') =>
  `<polyline points="${pts}" fill="none" stroke="${color}" stroke-width="${w}" stroke-linejoin="round" ${extra}/>`;
const average = (list, n, before) => list.map((_, i) => {
  let sum = 0;
  for (let k = i - n + 1; k <= i; k++) sum += k < 0 ? before : list[k];
  return sum / n;
});
const rules = (xs, ys, box) =>
  ys.map(y => `<path d="M${box[0]} ${y}.5H${box[1]}" stroke="#d8d8d8" stroke-width="1"/>`).join('') +
  xs.map(x => `<path d="M${x}.5 ${box[2]}V${box[3]}" stroke="#d8d8d8" stroke-width="1"/>`).join('');

function draw(c) {
  const { bars, vols, x0, step, body, base } = c;
  const at = i => Math.round(x0 + step * i);
  const closes = bars.map(b => b[0] ? b[1] : b[2]);
  let s = rules(c.xs, c.ys, c.box);
  s += `<path d="M${c.box[0]} ${c.split}.5H${c.box[1]}" stroke="#909090"/>`;
  s += '<g shape-rendering="crispEdges">';
  bars.forEach((b, i) => {
    const color = b[0] ? RED : BLUE, x = at(i), left = x - Math.floor(body / 2);
    const paint = i === bars.length - 1 ? RED : color;
    s += `<rect x="${x}" y="${b[3]}" width="1" height="${Math.max(1, b[4] - b[3])}" fill="${color}"/>`;
    s += `<rect x="${left}" y="${b[1]}" width="${body}" height="${Math.max(1, b[2] - b[1])}" fill="${color}"/>`;
    s += `<rect x="${left}" y="${base - vols[i]}" width="${body}" height="${vols[i]}" fill="${paint}"/>`;
  });
  s += '</g>';
  const trace = (list, f) => list.map((v, i) => at(i) + ',' + f(v).toFixed(1)).join(' ');
  s += line(trace(average(closes, 5, closes[0]), v => v), '#e020b8', 1, 'stroke-dasharray="5 5"');
  s += line(trace(average(closes, 10, closes[0]), v => v), '#1c3cb4', 1, 'stroke-dasharray="5 4"');
  c.averages.forEach(a => { s += line(a[0], a[1], a[2]); });
  [[5, '#e020b8'], [20, '#f0b000'], [60, '#109838'], [120, '#888']].forEach(([n, color]) => {
    s += line(trace(average(vols, n, c.before), v => base - v), color, 1);
  });
  return s + (c.over || '');
}

/* [up, body top, body bottom, high, low] for 160 sessions */
const day = `1 304 306 302 308/0 300 308 300 308/1 302 307 301 308/0 301 305 300 308/0 301 309 300 310/1 302 306 302 308/0 300 305 300 307/1 300 302 300 304/1 294 302 292 304/0 288 299 287 300/0 297 302 297 303/1 298 302 297 304/0 299 303 298 304/1 298 301 297 302/0 295 302 293 302/0 300 304 300 304/0 300 303 300 306/0 301 303 300 307/0 303 305 302 307/1 303 304 302 308/0 302 303 294 304/0 299 303 298 305/0 303 306 302 307/0 303 305 302 307/1 304 306 302 308/1 295 303 294 304/1 295 298 294 302/1 295 297 294 300/0 295 300 288 303/1 297 299 295 302/1 278 295 277 297/0 270 281 266 289/0 284 286 280 296/1 275 284 272 286/0 271 272 266 276/0 269 284 267 285/0 284 289 281 290/1 282 287 279 290/0 276 282 275 287/1 267 274 265 275/1 248 260 243 266/1 244 245 240 252/0 242 251 241 255/0 245 251 242 255/1 237 257 228 258/0 232 250 231 251/1 245 247 240 251/1 231 236 221 241/1 224 228 224 234/0 227 237 226 238/0 230 232 222 236/0 231 237 229 238/0 234 237 232 239/1 228 230 226 235/1 210 214 208 218/1 203 206 192 208/0 200 207 199 211/0 205 208 198 211/1 199 210 198 211/0 199 211 193 212/1 206 217 203 218/0 206 222 205 223/1 213 215 210 221/1 220 223 217 228/0 207 218 206 219/1 199 218 198 219/0 205 206 197 210/0 210 218 209 225/0 213 227 210 229/0 228 233 222 244/0 221 223 217 228/1 221 224 217 229/0 201 216 201 217/1 213 215 210 218/1 210 212 206 213/0 208 215 205 217/1 194 209 187 210/1 195 201 190 203/0 195 201 192 204/0 200 211 198 212/1 209 216 208 220/0 214 216 210 218/1 213 216 212 219/0 212 223 211 224/1 219 222 213 223/0 216 217 210 218/1 217 221 216 224/0 214 217 213 219/0 216 218 214 221/1 208 218 205 219/0 206 211 205 216/0 211 215 209 216/1 212 215 211 216/1 210 212 204 215/1 208 211 207 216/1 205 206 198 208/0 205 206 198 211/0 202 206 200 207/0 205 206 201 209/1 205 209 205 209/0 207 216 207 217/0 214 216 213 217/1 216 218 214 222/1 217 220 216 221/1 214 218 213 220/0 214 222 213 222/0 221 228 218 229/0 228 235 227 241/0 227 232 224 233/0 228 231 227 233/1 232 234 230 236/1 232 234 230 235/0 231 232 229 235/0 236 245 234 247/0 243 250 242 252/0 253 255 250 258/1 250 255 248 256/0 247 248 243 251/1 243 246 241 250/0 241 242 237 245/1 234 239 233 243/0 236 239 235 242/1 235 240 234 241/1 232 235 227 236/0 231 236 229 240/0 233 238 232 239/1 231 235 229 237/1 227 233 226 234/0 228 233 225 235/0 232 233 228 235/0 232 238 231 239/1 231 236 230 237/1 231 232 228 235/0 233 236 231 238/1 222 231 217 233/0 218 224 216 228/1 209 219 207 222/1 209 210 207 215/1 205 213 201 215/0 206 208 202 212/1 198 206 196 208/0 198 201 195 206/0 198 206 197 207/1 177 205 172 207/0 170 181 164 186/0 180 189 179 194/1 191 193 185 197/1 187 190 184 193/1 182 185 174 190/0 182 188 176 191/1 185 188 180 193/0 183 190 181 192/0 186 190 185 191/1 182 188 180 189/1 178 181 169 182/0 179 185 175 192/1 180 182 178 186/1 160 179 159 182/1 158 164 156 165/1 153 156 149 162`
  .split('/').map(b => b.split(' ').map(Number));
const dayVol = [17,18,19,10,25,17,14,16,25,17,12,12,20,11,13,11,8,12,10,11,15,12,10,12,12,25,19,20,30,25,66,57,34,40,32,23,19,19,19,41,69,34,26,25,47,33,21,41,26,25,21,16,15,25,25,34,25,23,24,28,
  20,24,20,13,18,31,32,27,14,18,11,10,17,16,12,15,36,24,22,28,18,12,14,20,12,10,11,9,10,18,12,11,9,13,11,12,14,10,9,9,16,10,8,9,11,15,18,20,12,10,8,9,13,37,23,19,9,9,9,13,14,8,10,12,20,9,8,9,8,7,9,8,8,8,32,14,26,14,20,14,27,18,14,57,45,29,14,12,20,14,11,11,8,15,25,23,11,32,20,21];

$('plotDay').innerHTML = draw({
  bars: day, vols: dayVol, before: 20, x0: 434, step: 9.7, body: 6, base: 477, split: 391, box: [431, 2022, 107, 479],
  xs: [682, 877, 1051, 1265, 1478, 1662, 1876], ys: [129, 152, 174, 220, 243, 266, 288, 312, 334, 357, 379, 425],
  averages: [
    ['433,301 480,303 560,304 620,302 690,302 730,298 805,290 830,285 860,274 878,272 910,262 940,255 960,250 980,240 1000,231 1016,227 1051,222 1075,217 1115,215 1175,212 1265,214 1310,211 1350,211 1440,211 1480,213 1520,219 1556,225 1587,233 1626,237 1696,238 1735,236 1759,231 1814,221 1845,213 1876,207 1904,200 1931,193 1950,190 1979,183', '#f0b000', 2.5],
    ['433,290 450,292 500,295 560,297 620,299 735,299 815,298 878,293 930,288 980,278 1051,267 1110,261 1150,254 1180,247 1223,239 1265,235 1319,228 1408,217 1444,215 1540,216 1599,219 1687,222 1775,224 1814,223 1876,219 1931,217 1979,214', '#f0f', 2.5],
    ['433,298 500,295 570,294 640,293 730,292 800,290 878,288 930,286 980,283 1050,280 1160,275 1265,267 1370,261 1450,256 1540,248 1590,247 1662,243 1720,239 1780,234 1877,225 1979,216', '#33cccc', 4],
    ['433,345 500,341 560,338 620,336 680,334 740,331 818,329 878,325 967,319 1020,313 1164,300 1265,293 1350,286 1478,277 1530,275 1662,269 1800,261 1877,258 1980,253', '#000', 5]],
  over: '<path d="M431 198H2022" stroke="#3434f0" stroke-width="2"/><path d="M667 274v18" stroke="#e81c0c"/><path d="M660 291h14l-7 8z" fill="#f00"/>'
});

/* three-minute bars follow a traced path, snapped to the 500-won tick */
const path = [[431,895],[440,895],[448,878],[458,870],[462,860],[475,858],[480,855],[487,870],[497,874],[505,868],[520,848],[530,857],[545,860],[555,858],[563,873],[575,858],[592,864],[600,856],[620,858],[645,858],[652,828],[661,835],[671,843],[680,843],[697,829],[703,834],[715,846],[720,857],[726,855],[738,850],[753,847],[759,857],[780,862],[797,857],[803,845],[810,843],[841,851],[890,848],[937,850],[975,852],[1002,858],[1020,861],[1043,860],[1070,868],[1081,877],[1097,872],[1116,875],[1135,878],[1142,853],[1152,856],[1164,845],[1181,834],[1192,840],[1223,835],[1250,842],[1258,818],[1270,818],[1288,830],[1300,834],[1322,840],[1325,816],[1341,803],[1353,814],[1364,825],[1384,830],[1403,826],[1418,815],[1433,817],[1479,820],[1498,826],[1506,835],[1525,842],[1548,840],[1556,828],[1571,835],[1594,825],[1607,828],[1642,830],[1649,822],[1667,822],[1674,828],[1695,833],[1699,842],[1716,838],[1730,842],[1741,833],[1776,830],[1812,826],[1819,830],[1823,818],[1847,816],[1882,822],[1893,818],[1910,826],[1919,816],[1932,810]];
const special = { 23: [1,860,896,853,898], 24: [0,863,873,831,888], 27: [1,817,853,813,858], 28: [0,817,837,814,850], 29: [0,837,863,836,873], 40: [1,827,847,827,850], 128: [1,853,878,836,883], 149: [1,821,847,817,848], 152: [0,793,822,787,823], 157: [0,837,858,836,859], 158: [1,837,858,836,863], 161: [1,817,842,807,843], 164: [1,802,816,801,817], 165: [0,802,816,801,822], 250: [1,814,831,807,832], 268: [1,807,827,802,837], 269: [0,807,812,797,815], 270: [0,811,814,807,822], 271: [1,777,817,767,822], 272: [1,757,777,757,782], 273: [0,762,782,745,782], 274: [1,740,777,740,787], 275: [0,752,762,731,767], 276: [0,757,767,745,777], 277: [1,757,767,752,777], 278: [1,757,758,746,772], 279: [0,766,767,766,767] };
const hash = n => { const v = Math.sin(n * 127.1) * 43758.5; return v - Math.floor(v); };
const level = x => {
  const k = path.findIndex(p => p[0] >= x);
  if (k < 1) return path[k < 0 ? path.length - 1 : 0][1];
  const [a, b] = [path[k - 1], path[k]];
  return a[1] + (b[1] - a[1]) * (x - a[0]) / (b[0] - a[0]);
};
const min = [];
let last = 893;
for (let i = 0; i < 280; i++) {
  const close = Math.round((level(431.5 + 5.554 * i) + (hash(i) - .5) * 8 + 2) / 5) * 5 - 2;
  if (special[i]) { min.push(special[i]); last = close; continue; }
  const top = Math.min(close, last), bottom = Math.max(close, last);
  const up = close === last ? hash(i + 900) > .5 : close < last;
  min.push([up ? 1 : 0, top, bottom, top - (hash(i + 300) > .5 ? 5 : 0), bottom + (hash(i + 600) > .55 ? 5 : 0)]);
  last = close;
}
const minVol = [8,3,26,21,43,16,32,13,20,32,17,6,6,7,7,36,31,20,17,11,10,83,3,38,43,12,12,26,22,22,7,14,12,12,6,7,8,3,4,10,11,14,6,7];
for (let i = minVol.length; i < 280; i++) minVol.push(2 + Math.round(hash(i + 50) * (i < 80 ? 5 : 3)));
const peaks = { 59: 15, 69: 8, 115: 11, 117: 11, 127: 11, 128: 55, 129: 17, 132: 19, 134: 26, 135: 8, 136: 10, 139: 13, 140: 14, 144: 10, 149: 27, 150: 47, 152: 27, 153: 18, 154: 11, 157: 28, 158: 12, 159: 10, 161: 18, 162: 17, 163: 7, 164: 12, 168: 11, 196: 11, 219: 8, 228: 10, 242: 6, 250: 14, 251: 9, 262: 9, 263: 15, 268: 32, 269: 20, 270: 7, 271: 47, 272: 48, 273: 27, 274: 67, 275: 26, 276: 30, 277: 18, 278: 17, 279: 33 };
Object.entries(peaks).forEach(([i, v]) => { minVol[i] = v; });

$('plotMin').innerHTML = draw({
  bars: min, vols: minVol, before: 8, x0: 431, step: 5.554, body: 4, base: 1153, split: 1052, box: [429, 2023, 710, 1155],
  xs: [505, 667, 779, 890, 1000, 1111, 1223, 1384, 1495, 1606, 1717, 1828, 1940], ys: [730, 756, 781, 807, 832, 858, 883, 908, 933, 959, 984, 1009, 1034, 1106],
  averages: [
    ['431,905 449,898 462,892 481,885 506,877 535,868 556,861 592,857 619,855 646,856 667,851 688,848 715,844 745,842 764,842 791,848 890,848 925,847 956,848 1000,852 1020,853 1054,858 1081,863 1111,867 1135,871 1154,869 1177,863 1196,858 1223,848 1250,840 1280,833 1326,834 1353,827 1384,825 1407,827 1426,819 1449,821 1510,821 1533,825 1579,831 1620,832 1646,828 1663,824 1692,825 1716,829 1759,831 1797,833 1829,826 1882,820 1917,818 1937,816 1953,807 1967,800 1981,793', '#f0b000', 3],
    ['431,919 462,912 489,903 516,897 542,891 562,889 592,884 642,878 667,872 718,859 753,855 779,853 837,851 890,849 975,847 1020,849 1077,853 1111,856 1165,857 1223,855 1273,853 1334,851 1364,844 1395,841 1433,835 1464,831 1487,827 1556,827 1620,824 1656,824 1699,827 1776,828 1847,828 1900,825 1953,819 1981,813', '#f0f', 3],
    ['431,963 458,955 497,941 520,934 546,928 556,925 592,917 634,911 667,905 703,897 749,888 779,883 841,874 890,868 956,863 1000,859 1020,857 1058,855 1111,853 1173,853 1250,851 1338,848 1403,846 1441,843 1518,841 1579,839 1620,839 1695,835 1759,832 1829,828 1882,826 1937,824 1981,819', '#33cccc', 5],
    ['431,1029 506,1015 556,1006 611,997 667,986 722,976 779,965 841,954 890,944 956,931 1000,924 1020,921 1066,912 1111,905 1154,898 1192,892 1230,887 1273,882 1326,878 1384,871 1441,865 1495,859 1556,854 1620,851 1656,848 1717,845 1776,842 1829,840 1882,838 1940,836 1982,834', '#000', 7]],
  over: '<path d="M429 791.500H2022M429 898H2022" stroke="#000" stroke-width="3"/><path d="M429 812H2022" stroke="#f00" stroke-width="3"/><path d="M556.500 710V1155M1272.500 710V1155" stroke="#e05050"/>'
});

/* axes */
const mark = (x, y, text, color = '#444') => `<text x="${x}" y="${y + 5}" fill="${color}">${text}</text>`;
function axis(x, labels, tags, split, right) {
  let s = '';
  labels.forEach(([y, t, half]) => {
    s += `<path d="M${x} ${y}.5h7" stroke="#999"/><path d="M${x} ${y + half}.5h3" stroke="#999"/>` + mark(x + 8, y - 1, t);
  });
  s += `<path d="M${x} ${split}.5H${right}" stroke="#909090"/>`;
  s += `<rect x="${right - 13}" y="${split + 5}" width="10" height="10" fill="#333"/><path d="M${right - 10} ${split + 8}l4 4m0-4l-4 4" stroke="#fff"/>`;
  tags.forEach(([y, t, sub]) => {
    s += `<rect x="${x + 8}" y="${y + 8}" width="66" height="14" fill="#d6e1ef"/>`;
    s += `<rect x="${x + 5}" y="${y - 8}" width="73" height="16" fill="#e81c0c"/>` + mark(x + 8, y, t, '#fff') + mark(x + 8, y + 15, sub, RED);
  });
  return s;
}
$('axisDay').innerHTML = axis(2022, [[174, '425,000', 12], [198, '400,000', 12], [220, '375,000', 11], [243, '350,000', 11], [266, '325,000', 11], [288, '300,000', 12], [312, '275,000', 11], [334, '250,000', 12], [357, '225,000', 11], [379, '200,000', 9], [425, '2,500K', 12]],
  [[152, '449,000', '1.13%'], [454, '950,460', '101.98%']], 391, 2103) + mark(2024, 117, 'LC:61.80', RED) + mark(2024, 132, 'HC:-0.77', BLUE);
$('axisMin').innerHTML = axis(2023, [[756, '450,000', 12], [807, '445,000', 12], [832, '442,500', 13], [858, '440,000', 12], [883, '437,500', 12], [908, '435,000', 12], [933, '432,500', 13], [959, '430,000', 12], [984, '427,500', 12], [1009, '425,000', 12], [1034, '422,500', 12], [1106, '50,000', 9]],
  [[766, '449,000', '1.13%'], [1119, '34,480', '199.43%']], 1052, 2104) + mark(2025, 719, 'LC:2.98', RED) + mark(2025, 734, 'HC:-0.77', BLUE);

const stamps = (list, x0, w) => list.map(([x, t, bold]) =>
  `<span style="left:${((x - x0) / w * 100).toFixed(2)}%">${bold ? `<b>${t}</b>` : t}</span>`).join('');
$('timeDay').innerHTML = stamps([[431, '2020/11'], [682, '2021/01'], [877, '02'], [1051, '03'], [1265, '04'], [1478, '05'], [1662, '06'], [1876, '07']], 431, 1591);
$('timeMin').innerHTML = stamps([[429, '07/13', 1], [505, '15'], [556, '07/14', 1], [667, '10'], [779, '11'], [890, '12'], [1000, '13'], [1111, '14'], [1223, '15'], [1272, '07/15', 1], [1384, '10'], [1495, '11'], [1606, '12'], [1717, '13'], [1828, '14'], [1940, '15']], 429, 1594);

/* drawing tools */
const wave = '<path d="M1 22l5-8 4 4 5-12 5 14 3-9" stroke="#b4b4b4"/>';
const dot = (x, y) => `<rect x="${x - 1.5}" y="${y - 1.5}" width="3" height="3" fill="#e03030"/>`;
const tools = {
  '전환': '<path d="M5 5h11v7H8v6h12" stroke="#2c4890" stroke-width="4"/><path d="M0 5l6-5v10zM24 18l-6-5v10z" fill="#2c4890"/>',
  '연결': '<path d="M1 2h8v20H1zM1 9h8M1 13h8M15 2h7v8h-7M15 14h7v8h-7" stroke="#999" stroke-width="2"/><path d="M8 6h8M20 18h-8" stroke="#16307c" stroke-width="2"/><path d="M14 2l5 4-5 4zM13 14l-5 4 5 4z" fill="#16307c"/>',
  '환경설정': '<path d="M12 1v22M1 12h22M4 4l16 16M20 4L4 20" stroke="#946a20" stroke-width="5"/><path d="M12 2v20M2 12h20M5 5l14 14M19 5L5 19" stroke="#f8bc40" stroke-width="3"/><circle cx="12" cy="12" r="6" fill="#f8bc40" stroke="#f8bc40" stroke-width="4"/><circle cx="12" cy="12" r="4" fill="#e6e4de" stroke="#555"/>',
  '수식': '<path d="M2 1h20v16H2z" fill="#fff" stroke="#999"/><path d="M3 12l5-6 4 4 8-7" stroke="#e06060"/><text class="big" x="7" y="21">f(x)</text>',
  '지표': '<path d="M2 1v20h12" stroke="#777" stroke-width="2"/><path d="M5 12l6-8 6 7" stroke="#aaa"/><path d="M4 14l6-6 5 3 6-8" stroke="#d83030" stroke-width="2"/><path d="M14 14h8v8h-8zM18 14v8M14 18h8" fill="#fff" stroke="#16307c" stroke-width="1.500"/>',
  '선택': wave + '<path d="M7 1l11 11-5 1 4 8-3 1-4-8-4 3z" fill="#16307c"/>',
  '수평선': wave + '<path d="M2 7h20" stroke="#16307c" stroke-width="2"/>' + dot(2, 7) + dot(22, 7),
  '추세선': wave + '<path d="M2 15L22 4" stroke="#16307c" stroke-width="2"/>' + dot(2, 15) + dot(22, 4),
  '자동추세': '<path d="M2 12L22 2M2 14l6-7 4 5 6-6 3 8" stroke="#888"/>' + dot(2, 12) + dot(22, 2) + '<text x="1" y="23">AUTO</text>',
  '지그재그': '<path d="M18 20l5-14" stroke="#b4b4b4"/><path d="M2 15l4-2 3 2 4-9 5 13" stroke="#16307c" stroke-width="1.500"/>' + dot(2, 15) + dot(13, 6) + dot(18, 19) + dot(9, 15),
  '봉': '<path d="M4 4v15M20 4v15" stroke="#16307c"/><path d="M12 1v22" stroke="#d83030"/><path d="M2 8h4v8H2zM18 8h4v8h-4z" fill="#2c4890" stroke="#16307c"/><path d="M10 5h4v13h-4z" fill="#fff" stroke="#d83030" stroke-width="1.500"/>',
  '화살표': wave + '<path d="M6 12V4h12v6" stroke="#16307c" stroke-width="4"/><path d="M1 11h10l-5 7zM13 9h10l-5 6z" fill="#16307c"/>',
  '텍스트': wave + '<path d="M2 3h9M6.500 3v8" stroke="#16307c" stroke-width="2"/>',
  '번호': '<path d="M4 20V9h8" stroke="#16307c" stroke-width="1.500"/><path d="M12 3h9v12h-9z" fill="#fff" stroke="#16307c" stroke-width="1.500"/><text class="big" x="14" y="13">1</text>' + dot(4, 20),
  '지우개': wave + '<rect x="9" y="3" width="9" height="15" rx="3" transform="rotate(38 13 10)" fill="#fffdf0" stroke="#333" stroke-width="1.500"/>',
  '모두 지우개': '<rect x="11" y="1" width="8" height="13" rx="3" transform="rotate(38 15 8)" fill="#fffdf0" stroke="#333" stroke-width="1.500"/><text x="1" y="23">ALL</text>',
  '표': '<path d="M2 3h20v19H2zM2 8h20M2 13h20M2 18h20M8 3v19" fill="#fff" stroke="#999"/><path d="M11 10h10M16 10v10" stroke="#16307c" stroke-width="3"/>',
  '고저종': wave + '<path d="M1 5h15" stroke="#d83030" stroke-width="2"/><path d="M1 12h15" stroke="#111" stroke-width="2"/><path d="M1 19h15" stroke="#2868b8" stroke-width="2"/><text x="18" y="7">H</text><text x="18" y="15">C</text><text x="18" y="23">L</text>',
  '연필': wave + '<path d="M1 20l6-7 5-6 6-1" stroke="#16307c" stroke-width="1.500"/><path d="M14 6l5-4v8z" fill="#f0c878" stroke="#555"/><path d="M19 2h4v8h-4z" fill="#16307c"/>',
  '원': '<circle cx="12" cy="11" r="9" fill="#90c4f0" stroke="#5090d0"/>' + wave
};
$('tools').innerHTML = Object.entries(tools).map(([name, art]) =>
  `<button aria-label="${name}"><svg viewBox="0 0 24 24">${art}</svg></button>`).join('');
```
